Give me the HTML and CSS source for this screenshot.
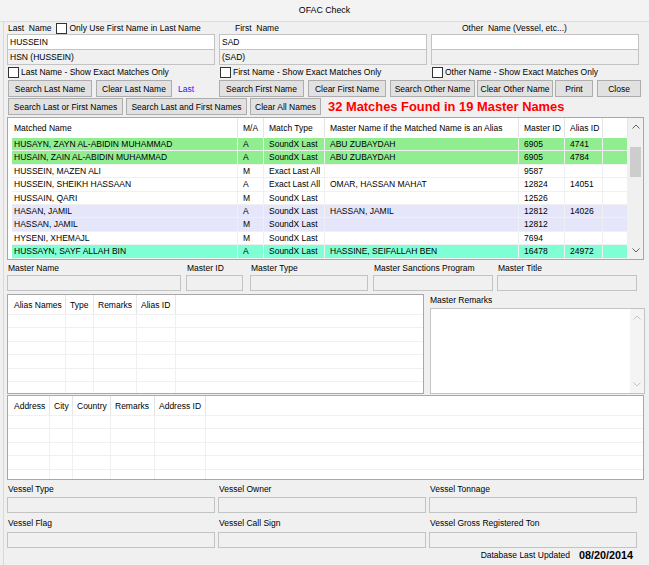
FILE: index.html
```html
<!DOCTYPE html>
<html>
<head>
<meta charset="utf-8">
<title>OFAC Check</title>
<link rel="stylesheet" href="styles.css">
</head>
<body>
<div class="window">
  <div class="titlebar">OFAC Check</div>
  <div class="main">
    <div class="names">
      <div class="namecol">
        <div class="lblrow"><span>Last  Name</span><span class="chk top-chk"></span><span>Only Use First Name in Last Name</span></div>
        <div class="tb white">HUSSEIN</div>
        <div class="tb sub">HSN (HUSSEIN)</div>
        <div class="chkrow"><span class="chk"></span><span>Last Name - Show Exact Matches Only</span></div>
      </div>
      <div class="namecol">
        <div class="lblrow first-lbl"><span>First  Name</span></div>
        <div class="tb white">SAD</div>
        <div class="tb sub">(SAD)</div>
        <div class="chkrow"><span class="chk"></span><span>First Name - Show Exact Matches Only</span></div>
      </div>
      <div class="namecol">
        <div class="lblrow other-lbl"><span>Other  Name (Vessel, etc...)</span></div>
        <div class="tb white"></div>
        <div class="tb sub"></div>
        <div class="chkrow"><span class="chk"></span><span>Other Name - Show Exact Matches Only</span></div>
      </div>
    </div>

    <div class="btnrow row1">
      <div class="btn b-sln">Search Last Name</div>
      <div class="btn b-cln">Clear Last Name</div>
      <span class="last-lbl">Last</span>
      <div class="btn b-sfn">Search First Name</div>
      <div class="btn b-cfn">Clear First Name</div>
      <div class="btn b-son">Search Other Name</div>
      <div class="btn b-con">Clear Other Name</div>
      <div class="btn b-print">Print</div>
      <div class="btn b-close">Close</div>
    </div>
    <div class="btnrow row2">
      <div class="btn b-slof">Search Last or First Names</div>
      <div class="btn b-slaf">Search Last and First Names</div>
      <div class="btn b-can">Clear All Names</div>
      <span class="matches">32 Matches Found in 19 Master Names</span>
    </div>

    <div class="lv lv-main">
      <div class="lv-body">
        <div class="mhead">
          <div class="hc">Matched Name</div>
          <div class="hc">M/A</div>
          <div class="hc">Match Type</div>
          <div class="hc">Master Name if the Matched Name is an Alias</div>
          <div class="hc">Master ID</div>
          <div class="hc">Alias ID</div>
          <div class="hc"></div>
        </div>
        <div class="mrow g"><div class="c">HUSAYN, ZAYN AL-ABIDIN MUHAMMAD</div><div class="c">A</div><div class="c">SoundX Last</div><div class="c">ABU ZUBAYDAH</div><div class="c">6905</div><div class="c">4741</div><div class="c"></div></div>
        <div class="mrow g"><div class="c">HUSAIN, ZAIN AL-ABIDIN MUHAMMAD</div><div class="c">A</div><div class="c">SoundX Last</div><div class="c">ABU ZUBAYDAH</div><div class="c">6905</div><div class="c">4784</div><div class="c"></div></div>
        <div class="mrow"><div class="c">HUSSEIN, MAZEN ALI</div><div class="c">M</div><div class="c">Exact Last All</div><div class="c"></div><div class="c">9587</div><div class="c"></div><div class="c"></div></div>
        <div class="mrow"><div class="c">HUSSEIN, SHEIKH HASSAAN</div><div class="c">A</div><div class="c">Exact Last All</div><div class="c">OMAR, HASSAN MAHAT</div><div class="c">12824</div><div class="c">14051</div><div class="c"></div></div>
        <div class="mrow"><div class="c">HUSSAIN, QARI</div><div class="c">M</div><div class="c">SoundX Last</div><div class="c"></div><div class="c">12526</div><div class="c"></div><div class="c"></div></div>
        <div class="mrow l"><div class="c">HASAN, JAMIL</div><div class="c">A</div><div class="c">SoundX Last</div><div class="c">HASSAN, JAMIL</div><div class="c">12812</div><div class="c">14026</div><div class="c"></div></div>
        <div class="mrow l"><div class="c">HASSAN, JAMIL</div><div class="c">M</div><div class="c">SoundX Last</div><div class="c"></div><div class="c">12812</div><div class="c"></div><div class="c"></div></div>
        <div class="mrow"><div class="c">HYSENI, XHEMAJL</div><div class="c">M</div><div class="c">SoundX Last</div><div class="c"></div><div class="c">7694</div><div class="c"></div><div class="c"></div></div>
        <div class="mrow a"><div class="c">HUSSAYN, SAYF ALLAH BIN</div><div class="c">A</div><div class="c">SoundX Last</div><div class="c">HASSINE, SEIFALLAH BEN</div><div class="c">16478</div><div class="c">24972</div><div class="c"></div></div>
      </div>
      <div class="vscroll">
        <div class="arrow"><svg width="8" height="5" viewBox="0 0 8 5"><polyline points="0.5,4.5 4,1 7.5,4.5" fill="none" stroke="#606060" stroke-width="1"/></svg></div>
        <div class="thumb"></div>
        <div class="spacer"></div>
        <div class="arrow"><svg width="8" height="5" viewBox="0 0 8 5"><polyline points="0.5,0.5 4,4 7.5,0.5" fill="none" stroke="#606060" stroke-width="1"/></svg></div>
      </div>
    </div>

    <div class="masterrow">
      <div class="field f-mn"><div class="flbl">Master Name</div><div class="tb ro"></div></div>
      <div class="field f-mid"><div class="flbl">Master ID</div><div class="tb ro"></div></div>
      <div class="field f-mt"><div class="flbl">Master Type</div><div class="tb ro"></div></div>
      <div class="field f-msp"><div class="flbl">Master Sanctions Program</div><div class="tb ro"></div></div>
      <div class="field f-mtitle"><div class="flbl">Master Title</div><div class="tb ro"></div></div>
    </div>

    <div class="middle">
      <div class="lv lv-alias">
        <div class="ahead grid-alias">
          <div class="hc">Alias Names</div><div class="hc">Type</div><div class="hc">Remarks</div><div class="hc">Alias ID</div><div class="hc last"></div>
        </div>
        <div class="erow grid-alias"><div></div><div></div><div></div><div></div><div></div></div>
        <div class="erow grid-alias"><div></div><div></div><div></div><div></div><div></div></div>
        <div class="erow grid-alias"><div></div><div></div><div></div><div></div><div></div></div>
        <div class="erow grid-alias"><div></div><div></div><div></div><div></div><div></div></div>
        <div class="erow grid-alias"><div></div><div></div><div></div><div></div><div></div></div>
        <div class="erow grid-alias"><div></div><div></div><div></div><div></div><div></div></div>
      </div>
      <div class="remarks">
        <div class="rlbl">Master Remarks</div>
        <div class="textarea">
          <div class="tscroll">
            <svg width="8" height="5" viewBox="0 0 8 5"><polyline points="0.5,4.5 4,1 7.5,4.5" fill="none" stroke="#c4c4c4" stroke-width="1"/></svg>
            <svg width="8" height="5" viewBox="0 0 8 5"><polyline points="0.5,0.5 4,4 7.5,0.5" fill="none" stroke="#c4c4c4" stroke-width="1"/></svg>
          </div>
        </div>
      </div>
    </div>

    <div class="lv lv-addr">
      <div class="ahead grid-addr">
        <div class="hc">Address</div><div class="hc">City</div><div class="hc">Country</div><div class="hc">Remarks</div><div class="hc">Address ID</div><div class="hc last"></div>
      </div>
      <div class="erow grid-addr"><div></div><div></div><div></div><div></div><div></div><div></div></div>
      <div class="erow grid-addr"><div></div><div></div><div></div><div></div><div></div><div></div></div>
      <div class="erow grid-addr"><div></div><div></div><div></div><div></div><div></div><div></div></div>
      <div class="erow grid-addr"><div></div><div></div><div></div><div></div><div></div><div></div></div>
      <div class="erow grid-addr"><div></div><div></div><div></div><div></div><div></div><div></div></div>
    </div>

    <div class="vgrid">
      <div class="vlbl">Vessel Type</div>
      <div class="vlbl">Vessel Owner</div>
      <div class="vlbl">Vessel Tonnage</div>
      <div class="tb ro"></div>
      <div class="tb ro"></div>
      <div class="tb ro"></div>
      <div class="vlbl v2">Vessel Flag</div>
      <div class="vlbl v2">Vessel Call Sign</div>
      <div class="vlbl v2">Vessel Gross Registered Ton</div>
      <div class="tb ro"></div>
      <div class="tb ro"></div>
      <div class="tb ro"></div>
    </div>

    <div class="dbrow"><span>Database Last Updated</span><span class="dbdate">08/20/2014</span></div>
  </div>
</div>
</body>
</html>
```
FILE: styles.css
```css
* { box-sizing: border-box; }
html, body { margin: 0; padding: 0; }
body {
  font-family: "Liberation Sans", Arial, sans-serif;
  font-size: 8.5px;
  color: #000;
  background: #f0f0f0;
}
.window {
  width: 649px;
  height: 565px;
  overflow: hidden;
  background: #f0f0f0;
}
.titlebar {
  height: 22px;
  line-height: 21px;
  text-align: center;
  font-size: 8.8px;
  background: #f3f3f3;
  border-bottom: 1px solid #dcdcdc;
}
.main {
  padding-left: 7px;
  height: 543px;
  background: linear-gradient(to right, transparent 3px, #d9d9d9 3px, #d9d9d9 4px, transparent 4px);
}

/* name inputs */
.names {
  display: grid;
  grid-template-columns: 208px 208px 208px;
  column-gap: 4px;
}
.lblrow {
  height: 12px;
  line-height: 12px;
  display: flex;
  align-items: center;
  white-space: pre;
  padding-left: 1px;
}
.first-lbl { padding-left: 16px; }
.other-lbl { padding-left: 31px; }
.chk {
  display: inline-block;
  flex: none;
  width: 11px;
  height: 11px;
  border: 1px solid #333;
  background: #fff;
}
.top-chk { margin-left: 5px; margin-right: 2px; }
.tb {
  height: 16px;
  line-height: 14px;
  padding-left: 2px;
  border: 1px solid #c3c3c3;
  white-space: nowrap;
  overflow: hidden;
}
.tb.white { background: #fff; }
.tb.sub { background: #f0f0f0; border-top: none; height: 15px; }
.tb.ro { background: #f0f0f0; }
.chkrow {
  height: 14px;
  display: flex;
  align-items: center;
  gap: 2px;
  padding-left: 1px;
  white-space: nowrap;
}

/* buttons */
.btnrow {
  display: flex;
  align-items: center;
  height: 17px;
  margin-top: 1px;
  white-space: nowrap;
}
.btn {
  flex: none;
  height: 17px;
  border: 1px solid #adadad;
  background: #e1e1e1;
  display: flex;
  align-items: center;
  justify-content: center;
}
.b-sln { margin-left: 1px; width: 84px; }
.b-cln { margin-left: 4px; width: 76px; }
.last-lbl { color: #1a1aff; margin-left: 6px; width: 41px; flex: none; }
.b-sfn { width: 85px; }
.b-cfn { margin-left: 4px; width: 78px; }
.b-son { margin-left: 4px; width: 85px; }
.b-con { margin-left: 2px; width: 76px; }
.b-print { margin-left: 2px; width: 38px; }
.b-close { margin-left: 4px; width: 44px; }
.b-slof { margin-left: 1px; width: 115px; }
.b-slaf { margin-left: 3px; width: 121px; }
.b-can { margin-left: 3px; width: 71px; }
.matches {
  margin-left: 7px;
  color: #ff0000;
  font-weight: bold;
  font-size: 12.9px;
}

/* list views */
.lv {
  border: 1px solid #a8a8a8;
  background: #fff;
  overflow: hidden;
}
.hc {
  border-right: 1px solid #e5e5e5;
  padding-left: 4px;
  white-space: nowrap;
  overflow: hidden;
}
.lv-main {
  margin-top: 2px;
  width: 637px;
  height: 143px;
  display: flex;
}
.lv-body { width: 620px; flex: none; }
.mhead {
  display: grid;
  grid-template-columns: 230px 26px 61px 194px 46px 38px 25px;
  height: 20px;
  line-height: 20px;
}
.mhead .hc { padding-left: 5px; }
.mhead .hc:first-child { padding-left: 6px; }
.mrow {
  display: grid;
  grid-template-columns: 226px 26px 61px 194px 46px 38px 25px;
  margin-left: 4px;
  height: 13.4px;
}
.mrow .c {
  border-right: 1px solid #f0f0f0;
  border-bottom: 1px solid #f0f0f0;
  padding-left: 5px;
  padding-top: 1px;
  line-height: 11.4px;
  white-space: nowrap;
  overflow: hidden;
}
.mrow .c:first-child { padding-left: 2px; }
.mrow.g { background: #90ee90; }
.mrow.l { background: #e6e6fa; }
.mrow.a { background: #7fffd4; }
.vscroll {
  width: 15px;
  flex: none;
  background: #f0f0f0;
  display: flex;
  flex-direction: column;
  align-items: center;
}
.vscroll .arrow {
  height: 17px;
  display: flex;
  align-items: center;
  justify-content: center;
}
.vscroll .thumb {
  width: 11px;
  height: 30px;
  margin-top: 12px;
  background: #cdcdcd;
}
.vscroll .spacer { flex: 1; }

/* master fields */
.masterrow { display: flex; }
.field { flex: none; }
.flbl {
  height: 15px;
  padding-top: 2px;
  line-height: 12px;
  padding-left: 1px;
  white-space: nowrap;
}
.f-mn { width: 174px; }
.f-mid { width: 57px; margin-left: 5px; }
.f-mt { width: 118px; margin-left: 7px; }
.f-msp { width: 120px; margin-left: 5px; }
.f-mtitle { width: 140px; margin-left: 4px; }

.middle {
  display: flex;
  margin-top: 3px;
  height: 100px;
}
.lv-alias { width: 417px; height: 100px; flex: none; }
.ahead {
  height: 20px;
  line-height: 20px;
  border-bottom: 1px solid #f0f0f0;
}
.ahead .hc:first-child { padding-left: 6px; }
.ahead .hc.last { border-right: none; }
.grid-alias {
  display: grid;
  grid-template-columns: 58px 28px 43px 39px 1fr;
}
.grid-addr {
  display: grid;
  grid-template-columns: 42px 23px 38px 44px 51px 1fr;
}
.erow { height: 13.4px; border-bottom: 1px solid #f0f0f0; }
.erow > div { border-right: 1px solid #f0f0f0; }
.erow > div:last-child { border-right: none; }

.remarks { margin-left: 6px; width: 215px; flex: none; }
.rlbl { height: 14px; line-height: 12px; padding-left: 0; }
.textarea {
  height: 86px;
  background: #fff;
  border: 1px solid #c3c3c3;
  display: flex;
  justify-content: flex-end;
}
.tscroll {
  width: 14px;
  background: #f4f4f4;
  display: flex;
  flex-direction: column;
  align-items: center;
  justify-content: space-between;
  padding: 6px 0 6px;
}

.lv-addr { margin-top: 1px; width: 637px; height: 85px; }

/* vessel */
.vgrid {
  display: grid;
  grid-template-columns: 208px 208px 208px;
  column-gap: 3px;
}
.vlbl {
  height: 17px;
  padding-top: 3px;
  line-height: 12px;
  padding-left: 1px;
  white-space: nowrap;
}
.vlbl.v2 { height: 19px; padding-top: 4px; }

.dbrow {
  width: 626px;
  height: 14px;
  line-height: 14px;
  display: flex;
  justify-content: flex-end;
  align-items: center;
  gap: 9px;
  white-space: nowrap;
}
.dbdate { font-weight: bold; font-size: 10.8px; }
```
